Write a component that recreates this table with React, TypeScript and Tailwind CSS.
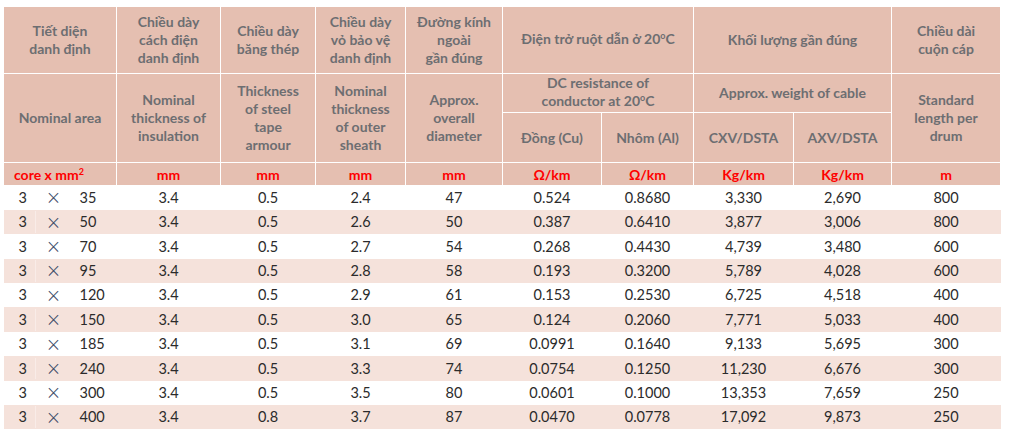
import React from "react";

const rows: [string, string, string, string, string, string, string, string, string, string][] = [
  ["35", "3.4", "0.5", "2.4", "47", "0.524", "0.8680", "3,330", "2,690", "800"],
  ["50", "3.4", "0.5", "2.6", "50", "0.387", "0.6410", "3,877", "3,006", "800"],
  ["70", "3.4", "0.5", "2.7", "54", "0.268", "0.4430", "4,739", "3,480", "600"],
  ["95", "3.4", "0.5", "2.8", "58", "0.193", "0.3200", "5,789", "4,028", "600"],
  ["120", "3.4", "0.5", "2.9", "61", "0.153", "0.2530", "6,725", "4,518", "400"],
  ["150", "3.4", "0.5", "3.0", "65", "0.124", "0.2060", "7,771", "5,033", "400"],
  ["185", "3.4", "0.5", "3.1", "69", "0.0991", "0.1640", "9,133", "5,695", "300"],
  ["240", "3.4", "0.5", "3.3", "74", "0.0754", "0.1250", "11,230", "6,676", "300"],
  ["300", "3.4", "0.5", "3.5", "80", "0.0601", "0.1000", "13,353", "7,659", "250"],
  ["400", "3.4", "0.8", "3.7", "87", "0.0470", "0.0778", "17,092", "9,873", "250"],
];

const widths = [113, 104, 95, 90, 97, 99, 92, 100, 98, 109];

const th = "border border-white bg-[#e5bfb1] text-[#6d6e71] font-bold text-center align-middle leading-[18px] text-[14px] p-0";
const unit = "border border-white bg-[#e5bfb1] text-[#ff0000] font-bold text-center align-middle text-[14px] p-0";

function Deg() {
  return <span className="relative -top-[5px] text-[9px]">o</span>;
}

export default function App() {
  return (
    <div className="bg-white w-[1009px] h-[437px] pl-[3px] pt-[6px] font-['Lato',_'Open_Sans',_sans-serif]">
      <table className="table-fixed border-collapse w-[998px]">
        <colgroup>
          {widths.map((w, i) => <col key={i} style={{ width: w }} />)}
        </colgroup>
        <thead>
          <tr className="h-[67px]">
            <th className={th}>Tiết diện<br />danh định</th>
            <th className={th}>Chiều dày<br />cách điện<br />danh định</th>
            <th className={th}>Chiều dày<br />băng thép</th>
            <th className={th}>Chiều dày<br />vỏ bảo vệ<br />danh định</th>
            <th className={th}>Đường kính<br />ngoài<br />gần đúng</th>
            <th className={th} colSpan={2}>Điện trở ruột dẫn ở 20<Deg />C</th>
            <th className={th} colSpan={2}>Khối lượng gần đúng</th>
            <th className={th}>Chiều dài<br />cuộn cáp</th>
          </tr>
          <tr className="h-[39px]">
            <th className={th} rowSpan={2}>Nominal area</th>
            <th className={th} rowSpan={2}>Nominal<br />thickness of<br />insulation</th>
            <th className={th} rowSpan={2}>Thickness<br />of steel<br />tape<br />armour</th>
            <th className={th} rowSpan={2}>Nominal<br />thickness<br />of outer<br />sheath</th>
            <th className={th} rowSpan={2}>Approx.<br />overall<br />diameter</th>
            <th className={th} colSpan={2}>DC resistance of<br />conductor at 20<Deg />C</th>
            <th className={th} colSpan={2}>Approx. weight of cable</th>
            <th className={th} rowSpan={2}>Standard<br />length per<br />drum</th>
          </tr>
          <tr className="h-[50px]">
            <th className={th}>Đồng (Cu)</th>
            <th className={th}>Nhôm (Al)</th>
            <th className={th}>CXV/DSTA</th>
            <th className={th}>AXV/DSTA</th>
          </tr>
          <tr className="h-[23px]">
            <th className={unit + " !text-left !pl-[10px]"}>core x mm<span className="relative -top-[5px] text-[9px]">2</span></th>
            <th className={unit}>mm</th>
            <th className={unit}>mm</th>
            <th className={unit}>mm</th>
            <th className={unit}>mm</th>
            <th className={unit}>Ω/km</th>
            <th className={unit}>Ω/km</th>
            <th className={unit}>Kg/km</th>
            <th className={unit}>Kg/km</th>
            <th className={unit}>m</th>
          </tr>
        </thead>
        <tbody className="text-[14.5px] text-[#2b2b2b]">
          {rows.map((r, i) => (
            <tr key={r[0]} className={"h-[24.4px] " + (i % 2 === 1 ? "bg-[#f5e2db]" : "bg-white")}>
              <td className="p-0">
                <div className="flex items-center">
                  <span className={"w-[32px] pl-[15px] border-r " + (i % 2 === 1 ? "border-[#f9ece8]" : "border-transparent")}>3</span>
                  <span className="w-[44px] pl-[10px] leading-none font-['DejaVu_Sans',_sans-serif] text-[19px] font-extralight text-[#3a4a66]">×</span>
                  <span>{r[0]}</span>
                </div>
              </td>
              {r.slice(1).map((v, j) => (
                <td key={j} className="p-0 text-center">{v}</td>
              ))}
            </tr>
          ))}
        </tbody>
      </table>
    </div>
  );
}
